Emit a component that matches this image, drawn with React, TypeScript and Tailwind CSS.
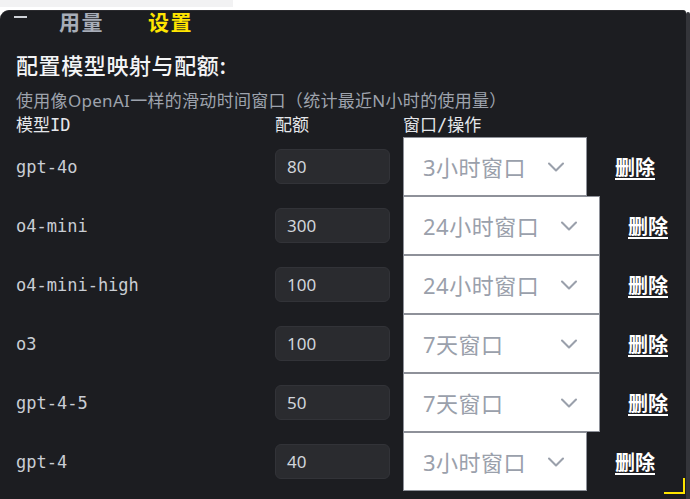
import React from "react";
import { ChevronDown } from "lucide-react";

type Row = { name: string; quota: string; win: string; wide: boolean };

const rows: Row[] = [
  { name: "gpt-4o", quota: "80", win: "3小时窗口", wide: false },
  { name: "o4-mini", quota: "300", win: "24小时窗口", wide: true },
  { name: "o4-mini-high", quota: "100", win: "24小时窗口", wide: true },
  { name: "o3", quota: "100", win: "7天窗口", wide: true },
  { name: "gpt-4-5", quota: "50", win: "7天窗口", wide: true },
  { name: "gpt-4", quota: "40", win: "3小时窗口", wide: false },
];

function ModelRow({ r }: { r: Row }) {
  return (
    <div className="flex h-[59px] items-center">
      <div className="w-[259px] font-['DejaVu_Sans_Mono','Noto_Sans_CJK_SC',monospace] text-[17px] leading-[24px] text-[#c9cdd4]">
        {r.name}
      </div>
      <div className="flex h-[35px] w-[115px] items-center rounded-[6px] border border-[#323338] bg-[#2a2b2f] pl-[11px] font-['Noto_Sans',sans-serif] text-[17px] text-[#d1d5db]">
        {r.quota}
      </div>
      <div
        className={
          "ml-[13px] flex h-[59px] items-center justify-between border border-[#8e9199] bg-white pl-[19px] pr-[16px] " +
          (r.wide ? "w-[197px]" : "w-[184px]")
        }
      >
        <span className="font-['Noto_Sans','Noto_Sans_CJK_SC',sans-serif] text-[22px] leading-[28px] tracking-[0.5px] text-[#9aa0ab]">
          {r.win}
        </span>
        <ChevronDown size={28} strokeWidth={1.8} color="#9aa0ab" />
      </div>
      <span className="ml-[28px] font-['Noto_Sans_CJK_SC',sans-serif] text-[20px] font-bold leading-[24px] text-white underline underline-offset-[3px]">
        删除
      </span>
    </div>
  );
}

export default function App() {
  return (
    <div className="relative h-[499px] w-[690px] overflow-hidden bg-white">
      <div className="flex h-[10px]">
        <div className="h-[7px] w-[233px] bg-[#f2f2f3]" />
      </div>
      <div className="flex h-[489px]">
        <div className="relative h-full w-[686px] rounded-tl-[9px] rounded-tr-[3px] border-t border-[#2a2a2e] bg-[#1c1d21] pl-[16px]">
          <div className="-mt-px flex h-[22px] items-center font-['Noto_Sans_CJK_SC',sans-serif] text-[21px] leading-[22px] font-bold">
            <div className="mb-[8px] ml-[-2px] h-[2px] w-[13px] bg-[#cfd2d8]" />
            <span className="ml-[32px] tracking-[1.5px] text-[#a7adb8]">用量</span>
            <span className="ml-[44px] tracking-[1.5px] text-[#ffe500]">设置</span>
          </div>
          <div className="mt-[18px] font-['Noto_Sans_CJK_SC',sans-serif] text-[22px] font-medium leading-[28px] tracking-[0.6px] text-[#f3f4f6]">
            配置模型映射与配额:
          </div>
          <div className="mt-[11px] font-['Noto_Sans','Noto_Sans_CJK_SC',sans-serif] text-[17px] leading-[24px] tracking-[0.3px] text-[#9ea3ad]">
            使用像OpenAI一样的滑动时间窗口（统计最近N小时的使用量）
          </div>
          <div className="flex font-['DejaVu_Sans_Mono','Noto_Sans_CJK_SC',monospace] text-[17px] leading-[24px] text-[#e5e7eb]">
            <span className="w-[259px]">模型ID</span>
            <span className="w-[128px]">配额</span>
            <span>窗口/操作</span>
          </div>
          <div className="flex flex-col">
            {rows.map((r) => (
              <ModelRow key={r.name} r={r} />
            ))}
          </div>
          <div className="absolute bottom-[5px] right-[1px] h-[16px] w-[21px] border-b-2 border-r-2 border-[#ffe500]" />
        </div>
        <div className="mt-[2px] h-full w-[4px] rounded-t-[2px] bg-[#34353a]" />
      </div>
    </div>
  );
}
